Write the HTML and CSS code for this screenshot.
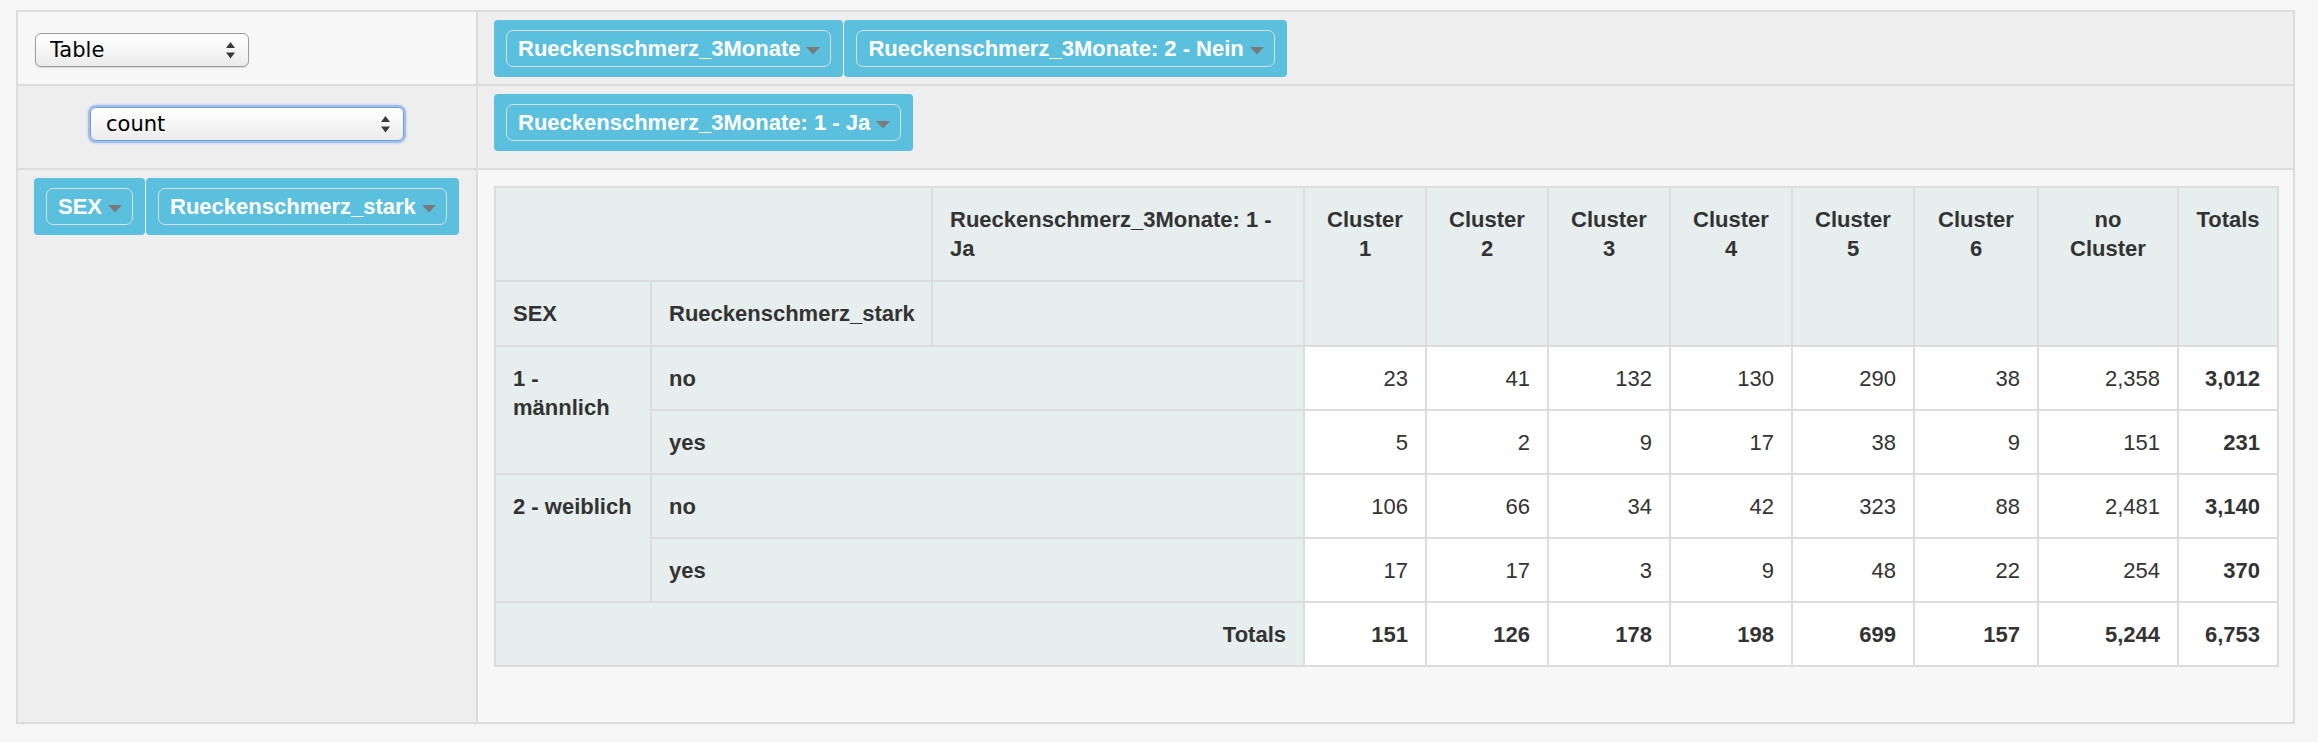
FILE: index.html
```html
<!DOCTYPE html>
<html lang="de">
<head>
<meta charset="utf-8">
<title>Pivot</title>
<link rel="stylesheet" href="styles.css">
</head>
<body>
<div class="pvt-ui">
  <div class="cell renderer">
    <span class="select-wrap">
      <select class="select select-renderer"><option>Table</option></select>
      <svg class="updown" viewBox="0 0 9 17" width="9" height="17"><polygon points="0,6 4.5,0 9,6"/><polygon points="0,10.5 4.5,16.5 9,10.5"/></svg>
    </span>
  </div>
  <div class="cell axis">
    <ul class="pills">
      <li class="pill"><span class="pill-inner">Rueckenschmerz_3Monate<svg class="tri" viewBox="0 0 14 8" width="14" height="8"><polygon points="0,0 14,0 7,7.5"/></svg></span></li>
      <li class="pill"><span class="pill-inner">Rueckenschmerz_3Monate: 2 - Nein<svg class="tri" viewBox="0 0 14 8" width="14" height="8"><polygon points="0,0 14,0 7,7.5"/></svg></span></li>
    </ul>
  </div>
  <div class="cell vals">
    <span class="select-wrap">
      <select class="select select-agg"><option>count</option></select>
      <svg class="updown" viewBox="0 0 9 17" width="9" height="17"><polygon points="0,6 4.5,0 9,6"/><polygon points="0,10.5 4.5,16.5 9,10.5"/></svg>
    </span>
  </div>
  <div class="cell axis">
    <ul class="pills">
      <li class="pill"><span class="pill-inner">Rueckenschmerz_3Monate: 1 - Ja<svg class="tri" viewBox="0 0 14 8" width="14" height="8"><polygon points="0,0 14,0 7,7.5"/></svg></span></li>
    </ul>
  </div>
  <div class="cell axis rows">
    <ul class="pills pills-nowrap">
      <li class="pill"><span class="pill-inner">SEX<svg class="tri" viewBox="0 0 14 8" width="14" height="8"><polygon points="0,0 14,0 7,7.5"/></svg></span></li>
      <li class="pill"><span class="pill-inner">Rueckenschmerz_stark<svg class="tri" viewBox="0 0 14 8" width="14" height="8"><polygon points="0,0 14,0 7,7.5"/></svg></span></li>
    </ul>
  </div>
  <div class="cell area">
    <table class="pvt-table">
      <colgroup>
        <col class="w-sex"><col class="w-stark"><col class="w-axis">
        <col class="w-cl"><col class="w-cl"><col class="w-cl"><col class="w-cl"><col class="w-cl">
        <col class="w-cl6"><col class="w-no"><col class="w-tot">
      </colgroup>
      <thead>
        <tr>
          <th colspan="2"></th>
          <th>Rueckenschmerz_3Monate: 1 - Ja</th>
          <th class="col-label" rowspan="2">Cluster 1</th>
          <th class="col-label" rowspan="2">Cluster 2</th>
          <th class="col-label" rowspan="2">Cluster 3</th>
          <th class="col-label" rowspan="2">Cluster 4</th>
          <th class="col-label" rowspan="2">Cluster 5</th>
          <th class="col-label" rowspan="2">Cluster 6</th>
          <th class="col-label" rowspan="2">no Cluster</th>
          <th class="col-label" rowspan="2">Totals</th>
        </tr>
        <tr>
          <th>SEX</th>
          <th>Rueckenschmerz_stark</th>
          <th></th>
        </tr>
      </thead>
      <tbody>
        <tr>
          <th rowspan="2">1 - männlich</th>
          <th colspan="2">no</th>
          <td>23</td><td>41</td><td>132</td><td>130</td><td>290</td><td>38</td><td>2,358</td><td class="tot">3,012</td>
        </tr>
        <tr>
          <th colspan="2">yes</th>
          <td>5</td><td>2</td><td>9</td><td>17</td><td>38</td><td>9</td><td>151</td><td class="tot">231</td>
        </tr>
        <tr>
          <th rowspan="2">2 - weiblich</th>
          <th colspan="2">no</th>
          <td>106</td><td>66</td><td>34</td><td>42</td><td>323</td><td>88</td><td>2,481</td><td class="tot">3,140</td>
        </tr>
        <tr>
          <th colspan="2">yes</th>
          <td>17</td><td>17</td><td>3</td><td>9</td><td>48</td><td>22</td><td>254</td><td class="tot">370</td>
        </tr>
        <tr>
          <th colspan="3" class="total-label">Totals</th>
          <td class="tot">151</td><td class="tot">126</td><td class="tot">178</td><td class="tot">198</td><td class="tot">699</td><td class="tot">157</td><td class="tot">5,244</td><td class="tot">6,753</td>
        </tr>
      </tbody>
    </table>
  </div>
</div>
</body>
</html>
```
FILE: styles.css
```css
html, body {
  background: #f6f6f6;
}
body {
  margin: 10px 0 0 16px;
  font-family: "Liberation Sans", Arial, Helvetica, sans-serif;
  color: #333;
}

.pvt-ui {
  display: grid;
  box-sizing: border-box;
  width: 2279px;
  grid-template-columns: 458px 1815px;
  grid-template-rows: 72px 82px 552px;
  gap: 2px;
  padding: 2px;
  background: #dcdcdc;
}

.cell {
  background: #eeeeee;
  box-sizing: border-box;
}
.renderer {
  background: #f7f7f7;
  padding: 21px 0 0 17px;
}
.vals {
  padding-top: 21px;
  display: flex;
  justify-content: center;
  align-items: flex-start;
}
.axis {
  padding: 8px 16px;
}
.area {
  background: #f7f7f7;
  padding: 16px;
}

/* selects */
.select-wrap {
  position: relative;
  display: inline-block;
}
.select {
  -webkit-appearance: none;
  appearance: none;
  display: block;
  box-sizing: border-box;
  height: 34px;
  margin: 0;
  padding: 0 30px 0 14px;
  font-family: "DejaVu Sans", "Liberation Sans", sans-serif;
  font-size: 21px;
  color: #000;
  border: 1px solid #9c9c9c;
  border-radius: 6px;
  background: linear-gradient(#ffffff 0%, #f6f6f6 50%, #ebebeb 100%);
  box-shadow: 0 1px 1px rgba(0, 0, 0, 0.12);
  outline: none;
}
.select-renderer {
  width: 214px;
}
.select-agg {
  width: 314px;
  padding-left: 15px;
  border-color: #6f9fdc;
  box-shadow: 0 0 0 2px rgba(120, 165, 230, 0.55), 0 0 2px 3px rgba(120, 165, 230, 0.25);
}
.updown {
  position: absolute;
  right: 14px;
  top: 9px;
  fill: #3a3a3a;
  pointer-events: none;
}

/* pills */
.pills {
  list-style: none;
  margin: 0;
  padding: 0;
  display: flex;
  flex-wrap: wrap;
  align-items: flex-start;
  gap: 1px;
}
.pills-nowrap {
  flex-wrap: nowrap;
}
.pill {
  display: flex;
  flex-shrink: 0;
  background: #5bc0de;
  border-radius: 4px;
  padding: 10px 12px;
}
.pill-inner {
  display: flex;
  align-items: center;
  border: 1px solid #d9dfe1;
  border-radius: 7px;
  padding: 3px 10px 3px 11px;
  color: #fff;
  font-weight: bold;
  font-size: 22px;
  line-height: 29px;
  white-space: nowrap;
}
.tri {
  margin-left: 6px;
  margin-top: 5px;
  fill: #7a7a7a;
}

/* table */
.pvt-table {
  border-collapse: collapse;
  table-layout: fixed;
  width: 1785px;
  font-size: 22px;
  line-height: 29px;
  color: #333;
}
.w-sex { width: 156px; }
.w-stark { width: 281px; }
.w-axis { width: 372px; }
.w-cl { width: 122px; }
.w-cl6 { width: 124px; }
.w-no { width: 140px; }
.w-tot { width: 100px; }

.pvt-table th,
.pvt-table td {
  border: 2px solid #dcdcdc;
  padding: 17px;
  vertical-align: top;
}
.pvt-table tbody th,
.pvt-table tbody td {
  padding-bottom: 16px;
}
.pvt-table th {
  background: #e6eeee;
  font-weight: bold;
  text-align: left;
}
.pvt-table th.col-label {
  text-align: center;
}
.pvt-table th.total-label {
  text-align: right;
}
.pvt-table td {
  background: #fff;
  text-align: right;
  font-weight: normal;
}
.pvt-table td.tot {
  font-weight: bold;
}
```
